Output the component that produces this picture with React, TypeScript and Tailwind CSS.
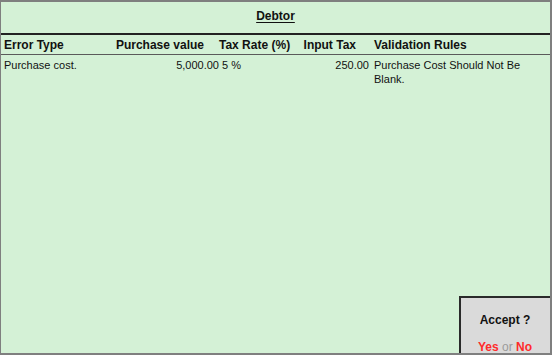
import React from "react";

const rows = [
    {
        errorType: "Purchase cost.",
        value: "5,000.00",
        rate: "5 %",
        tax: "250.00",
        rule: "Purchase Cost Should Not Be Blank.",
    },
];

const App = () => {
    return (
        <div
            className="relative w-[552px] h-[355px] overflow-hidden bg-[#d4f1d6] border-t-2 border-l border-r-2 border-b-2 border-[#7f7f7f] text-[#111] text-[11px]"
            style={{ fontFamily: '"Liberation Sans", Arial, sans-serif' }}
        >
            {/* Title */}
            <div className="h-[31px] flex justify-center pt-[7px]">
                <span className="font-bold text-[12px] leading-[14px] underline underline-offset-2">Debtor</span>
            </div>

            {/* Header row */}
            <div className="border-t-2 border-[#222] border-b border-b-[#5a5a5a] h-[22px] flex items-center font-bold text-[12px]">
                <div className="w-[112px] pl-[3px]">Error Type</div>
                <div className="w-[106px] text-right pr-[15px]">Purchase value</div>
                <div className="w-[83px]">Tax Rate (%)</div>
                <div className="w-[67px] text-right pr-[13px]">Input Tax</div>
                <div className="flex-1 pl-[5px]">Validation Rules</div>
            </div>

            {/* Data rows */}
            {rows.map((r, i) => (
                <div key={i} className="flex pt-[3px] leading-[14px]">
                    <div className="w-[112px] pl-[3px]">{r.errorType}</div>
                    <div className="w-[106px] text-right">{r.value}</div>
                    <div className="w-[83px] pl-[3px]">{r.rate}</div>
                    <div className="w-[67px] text-right">{r.tax}</div>
                    <div className="w-[160px] pl-[5px]">{r.rule}</div>
                </div>
            ))}

            {/* Accept popup */}
            <div className="absolute left-[458px] top-[294px] w-[100px] h-[70px] bg-[#dadada] border-t-2 border-l-2 border-[#2a2a2a] flex flex-col items-center pr-[10px]">
                <div className="mt-[15px] font-bold text-[12px] leading-[14px]">Accept ?</div>
                <div className="mt-[13px] text-[12px] leading-[14px]">
                    <span className="font-bold text-[#ff2b2b]">Yes</span>
                    <span className="text-[#9a9a9a]"> or </span>
                    <span className="font-bold text-[#ff2b2b]">No</span>
                </div>
            </div>
        </div>
    );
};

export default App;
